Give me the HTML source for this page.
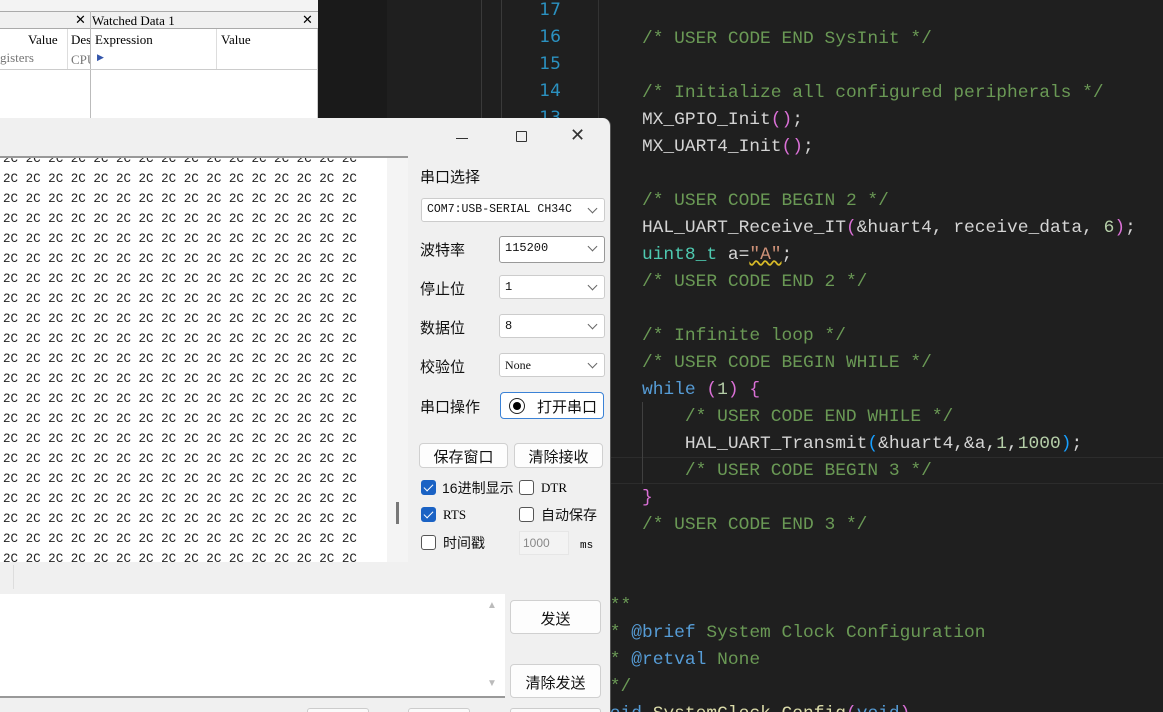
<!DOCTYPE html>
<html><head><meta charset="utf-8"><style>
*{margin:0;padding:0;box-sizing:border-box}
html{width:1163px;height:712px;overflow:hidden}
body{width:1163px;height:712px;overflow:hidden;background:#1f1f1f;position:relative;font-family:"Liberation Sans","Noto Sans CJK SC",sans-serif}
.a{position:absolute}
.code{position:absolute;left:599px;top:-1.5px;font-family:"Liberation Mono","DejaVu Sans Mono",monospace;font-size:17.9px;line-height:27px;color:#d4d4d4;white-space:pre}
.c{color:#6a9955}.t{color:#4ec9b0}.k{color:#569cd6}.s{color:#ce9178}.n{color:#b5cea8}.p{color:#da70d6}.b{color:#179fff}
.ln{position:absolute;left:500px;width:61px;text-align:right;font-family:"DejaVu Sans",sans-serif;font-size:17px;color:#2b91c0;line-height:27px}
.cn{font-family:"Liberation Sans","Noto Sans CJK SC",sans-serif;font-size:15px;color:#111}
.sel{position:absolute;left:499px;width:106px;height:24px;background:#fff;border:1px solid #ccc;border-radius:3px;font-family:"Liberation Mono",monospace;font-size:12px;padding:4px 5px;color:#111}
.sel:after{content:"";position:absolute;right:8px;top:6px;width:6px;height:6px;border-right:1.3px solid #666;border-bottom:1.3px solid #666;transform:rotate(45deg)}
.btn{position:absolute;background:#fdfdfd;border:1px solid #d0d0d0;border-radius:4px;text-align:center;font-size:15px;color:#111}
.cb{position:absolute;width:15px;height:15px;border:1.3px solid #555;border-radius:3px;background:#fff}
.cb.on{background:#1a62c4;border-color:#1a62c4}
.cb.on:after{content:"";position:absolute;left:4px;top:1px;width:4px;height:8px;border-right:1.5px solid #fff;border-bottom:1.5px solid #fff;transform:rotate(45deg)}
.hex{position:absolute;left:3px;top:-9px;font-family:"Liberation Mono",monospace;font-size:12.55px;line-height:20px;color:#222;white-space:pre}
</style></head><body>
<div class="a" style="left:318px;top:0;width:69px;height:712px;background:#1a1a1a"></div>
<div class="a" style="left:481px;top:0;width:1px;height:712px;background:#3a3a3a"></div>
<div class="a" style="left:501px;top:0;width:1px;height:712px;background:#3a3a3a"></div>
<div class="a" style="left:598px;top:0;width:1px;height:712px;background:#333"></div>
<div class="ln" style="top:-3.5px">17<br>16<br>15<br>14<br>13</div>
<div class="a" style="left:599px;top:457px;width:564px;height:27px;border-top:1px solid #2c2c2c;border-bottom:1px solid #2c2c2c"></div>
<div class="a" style="left:642px;top:402px;width:1px;height:82px;background:#404040"></div>
<div class="code"><span> </span>
    <span class="c">/* USER CODE END SysInit */</span>

    <span class="c">/* Initialize all configured peripherals */</span>
    MX_GPIO_Init<span class="p">()</span>;
    MX_UART4_Init<span class="p">()</span>;

    <span class="c">/* USER CODE BEGIN 2 */</span>
    HAL_UART_Receive_IT<span class="p">(</span>&amp;huart4, receive_data, <span class="n">6</span><span class="p">)</span>;
    <span class="t">uint8_t</span> a=<span class="s" style="text-decoration:underline wavy #d7ba28">"A"</span>;
    <span class="c">/* USER CODE END 2 */</span>

    <span class="c">/* Infinite loop */</span>
    <span class="c">/* USER CODE BEGIN WHILE */</span>
    <span class="k">while</span> <span class="p">(</span><span class="n">1</span><span class="p">)</span> <span class="p">{</span>
        <span class="c">/* USER CODE END WHILE */</span>
        HAL_UART_Transmit<span class="b">(</span>&amp;huart4,&amp;a,<span class="n">1</span>,<span class="n">1000</span><span class="b">)</span>;
        <span class="c">/* USER CODE BEGIN 3 */</span>
    <span class="p">}</span>
    <span class="c">/* USER CODE END 3 */</span>


<span class="c">/**</span>
<span class="c"> * </span><span class="k">@brief</span><span class="c"> System Clock Configuration</span>
<span class="c"> * </span><span class="k">@retval</span><span class="c"> None</span>
<span class="c"> */</span>
<span class="k">void</span> <span style="color:#dcdcaa">SystemClock_Config</span><span class="p">(</span><span class="k">void</span><span class="p">)</span></div>

<div class="a" style="left:0;top:0;width:318px;height:118px;background:#fff;border-right:1px solid #ccc">
  <div class="a" style="left:0;top:0;width:318px;height:11px;background:#f3f3f3"></div>
  <div class="a" style="left:0;top:11px;width:318px;height:18px;background:#f0f0f0;border-top:1px solid #aaa;border-bottom:1px solid #aaa;font-family:'Liberation Serif',serif;font-size:13px">
    <span class="a" style="left:75px;top:0">✕</span>
    <span class="a" style="left:92px;top:1px">Watched Data 1</span>
    <span class="a" style="left:302px;top:0">✕</span>
  </div>
  <div class="a" style="left:90px;top:11px;width:1px;height:107px;background:#bbb"></div>
  <div class="a" style="left:0;top:29px;width:318px;height:41px;border-bottom:1px solid #ccc;font-family:'Liberation Serif',serif;font-size:13px">
    <span class="a" style="left:28px;top:3px">Value</span>
    <div class="a" style="left:67px;top:0;width:1px;height:40px;background:#ddd"></div>
    <span class="a" style="left:71px;top:3px;width:19px;overflow:hidden">Des</span>
    <span class="a" style="left:95px;top:3px">Expression</span>
    <div class="a" style="left:216px;top:0;width:1px;height:40px;background:#ddd"></div>
    <span class="a" style="left:221px;top:3px">Value</span>
    <span class="a" style="left:0;top:21px;color:#777">gisters</span>
    <span class="a" style="left:71px;top:23px;color:#777;width:19px;overflow:hidden">CPU</span>
    <span class="a" style="left:97px;top:23px;color:#3355aa;font-size:9px">▶</span>
  </div>
</div>

<div class="a" style="left:0;top:118px;width:611px;height:594px;background:#f0f0f0;border-top-right-radius:8px;border-right:1px solid #555">
  <div class="a" style="left:456px;top:20px;width:12px;height:1px;background:#333"></div>
  <div class="a" style="left:516px;top:13px;width:11px;height:11px;border:1px solid #333;border-radius:1px"></div>
  <div class="a" style="left:570px;top:7px;font-size:18px;color:#333;font-weight:300">✕</div>
  <div class="a" style="left:0;top:38px;width:408px;height:406px;background:#fff;border-top:2px solid #999;overflow:hidden">
    <div class="hex">2C 2C 2C 2C 2C 2C 2C 2C 2C 2C 2C 2C 2C 2C 2C 2C
2C 2C 2C 2C 2C 2C 2C 2C 2C 2C 2C 2C 2C 2C 2C 2C
2C 2C 2C 2C 2C 2C 2C 2C 2C 2C 2C 2C 2C 2C 2C 2C
2C 2C 2C 2C 2C 2C 2C 2C 2C 2C 2C 2C 2C 2C 2C 2C
2C 2C 2C 2C 2C 2C 2C 2C 2C 2C 2C 2C 2C 2C 2C 2C
2C 2C 2C 2C 2C 2C 2C 2C 2C 2C 2C 2C 2C 2C 2C 2C
2C 2C 2C 2C 2C 2C 2C 2C 2C 2C 2C 2C 2C 2C 2C 2C
2C 2C 2C 2C 2C 2C 2C 2C 2C 2C 2C 2C 2C 2C 2C 2C
2C 2C 2C 2C 2C 2C 2C 2C 2C 2C 2C 2C 2C 2C 2C 2C
2C 2C 2C 2C 2C 2C 2C 2C 2C 2C 2C 2C 2C 2C 2C 2C
2C 2C 2C 2C 2C 2C 2C 2C 2C 2C 2C 2C 2C 2C 2C 2C
2C 2C 2C 2C 2C 2C 2C 2C 2C 2C 2C 2C 2C 2C 2C 2C
2C 2C 2C 2C 2C 2C 2C 2C 2C 2C 2C 2C 2C 2C 2C 2C
2C 2C 2C 2C 2C 2C 2C 2C 2C 2C 2C 2C 2C 2C 2C 2C
2C 2C 2C 2C 2C 2C 2C 2C 2C 2C 2C 2C 2C 2C 2C 2C
2C 2C 2C 2C 2C 2C 2C 2C 2C 2C 2C 2C 2C 2C 2C 2C
2C 2C 2C 2C 2C 2C 2C 2C 2C 2C 2C 2C 2C 2C 2C 2C
2C 2C 2C 2C 2C 2C 2C 2C 2C 2C 2C 2C 2C 2C 2C 2C
2C 2C 2C 2C 2C 2C 2C 2C 2C 2C 2C 2C 2C 2C 2C 2C
2C 2C 2C 2C 2C 2C 2C 2C 2C 2C 2C 2C 2C 2C 2C 2C
2C 2C 2C 2C 2C 2C 2C 2C 2C 2C 2C 2C 2C 2C 2C 2C
2C 2C 2C 2C 2C 2C 2C 2C 2C 2C 2C 2C 2C 2C 2C 2C</div>
    <div class="a" style="left:387px;top:0;width:21px;height:406px;background:#f4f4f4"></div>
    <div class="a" style="left:396px;top:344px;width:3px;height:22px;background:#777"></div>
  </div>
  <div class="a" style="left:0;top:447px;width:14px;height:24px;border-right:1px solid #ddd;background:#f0f0f0"></div>
  <div class="a cn" style="left:420px;top:48px">串口选择</div>
  <div class="sel" style="left:421px;top:80px;width:184px;font-size:11.5px">COM7:USB-SERIAL CH34C</div>
  <div class="a cn" style="left:420px;top:121px">波特率</div>
  <div class="sel" style="top:118px;height:27px;border-color:#999">115200</div>
  <div class="a cn" style="left:420px;top:160px">停止位</div>
  <div class="sel" style="top:157px">1</div>
  <div class="a cn" style="left:420px;top:199px">数据位</div>
  <div class="sel" style="top:196px">8</div>
  <div class="a cn" style="left:420px;top:238px">校验位</div>
  <div class="sel" style="top:235px;font-family:'Liberation Serif',serif">None</div>
  <div class="a cn" style="left:420px;top:278px">串口操作</div>
  <div class="btn" style="left:500px;top:274px;width:104px;height:27px;border:1.5px solid #3b82d6;background:#fff;padding-top:3px;text-align:left;padding-left:36px">打开串口
    <div class="a" style="left:8px;top:5px;width:16px;height:16px;border-radius:50%;border:1.5px solid #222"><div class="a" style="left:2.5px;top:2.5px;width:8px;height:8px;border-radius:50%;background:#000"></div></div>
  </div>
  <div class="btn" style="left:419px;top:325px;width:89px;height:25px;padding-top:2px">保存窗口</div>
  <div class="btn" style="left:514px;top:325px;width:89px;height:25px;padding-top:2px">清除接收</div>
  <div class="cb on" style="left:421px;top:362px"></div><div class="a cn" style="left:442px;top:360px;font-size:14px">16进制显示</div>
  <div class="cb" style="left:519px;top:362px"></div><div class="a" style="left:541px;top:362px;font-family:'Liberation Serif',serif;font-size:13px">DTR</div>
  <div class="cb on" style="left:421px;top:389px"></div><div class="a" style="left:443px;top:389px;font-family:'Liberation Serif',serif;font-size:13px">RTS</div>
  <div class="cb" style="left:519px;top:389px"></div><div class="a cn" style="left:541px;top:387px;font-size:14px">自动保存</div>
  <div class="cb" style="left:421px;top:417px"></div><div class="a cn" style="left:443px;top:415px;font-size:14px">时间戳</div>
  <div class="a" style="left:519px;top:413px;width:50px;height:24px;background:#f3f3f3;border:1px solid #e6e6e6;font-size:12px;color:#888;padding:4px 3px">1000</div>
  <div class="a" style="left:580px;top:422px;font-family:'Liberation Mono',monospace;font-size:11px">ms</div>
  <div class="a" style="left:0;top:476px;width:505px;height:104px;background:#fff;border-bottom:2px solid #999">
    <div class="a" style="left:487px;top:6px;color:#bbb;font-size:10px">▲</div>
    <div class="a" style="left:487px;top:84px;color:#bbb;font-size:10px">▼</div>
  </div>
  <div class="btn" style="left:510px;top:482px;width:91px;height:34px;padding-top:7px">发送</div>
  <div class="btn" style="left:510px;top:546px;width:91px;height:34px;padding-top:7px">清除发送</div>
  <div class="a" style="left:307px;top:590px;width:62px;height:10px;border:1px solid #ccc;border-radius:3px;background:#fafafa"></div>
  <div class="a" style="left:408px;top:590px;width:62px;height:10px;border:1px solid #ccc;border-radius:3px;background:#fafafa"></div>
  <div class="a" style="left:510px;top:590px;width:91px;height:10px;border:1px solid #ccc;border-radius:3px;background:#fafafa"></div>
</div>
</body></html>
